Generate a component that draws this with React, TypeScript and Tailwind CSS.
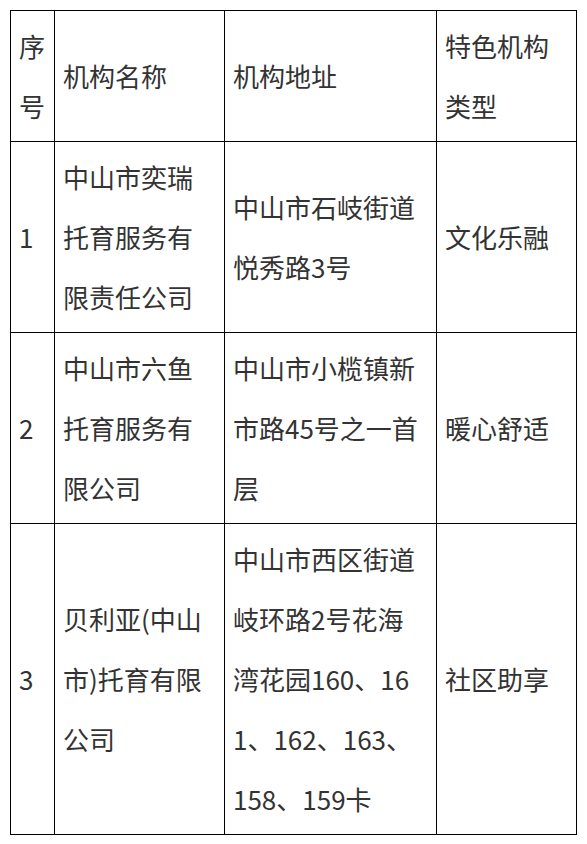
import React from "react";

const rows = [
  {
    no: "1",
    name: ["中山市奕瑞", "托育服务有", "限责任公司"],
    addr: ["中山市石岐街道", "悦秀路3号"],
    type: "文化乐融",
  },
  {
    no: "2",
    name: ["中山市六鱼", "托育服务有", "限公司"],
    addr: ["中山市小榄镇新", "市路45号之一首", "层"],
    type: "暖心舒适",
  },
  {
    no: "3",
    name: ["贝利亚(中山", "市)托育有限", "公司"],
    addr: ["中山市西区街道", "岐环路2号花海", "湾花园160、16", "1、162、163、", "158、159卡"],
    type: "社区助享",
  },
];

const Lines = ({ lines }: { lines: string[] }) => (
  <>
    {lines.map((l, i) => (
      <span key={i} className="block whitespace-nowrap">
        {l}
      </span>
    ))}
  </>
);

export default function App() {
  const cell = "border border-black px-2 py-[5px] align-middle text-left font-normal";

  return (
    <div className="bg-white min-h-[844px] pt-[10px] pl-[10px]">
      <table
        className="table-fixed border-collapse w-[566px] text-[26px] leading-[60px] text-[#333]"
        style={{ fontFamily: '"Noto Sans CJK SC", "Noto Sans", sans-serif' }}
      >
        <colgroup>
          <col className="w-[44px]" />
          <col className="w-[170px]" />
          <col className="w-[212px]" />
          <col className="w-[140px]" />
        </colgroup>
        <thead>
          <tr>
            <th className={cell}>
              <Lines lines={["序", "号"]} />
            </th>
            <th className={cell}>机构名称</th>
            <th className={cell}>机构地址</th>
            <th className={cell}>
              <Lines lines={["特色机构", "类型"]} />
            </th>
          </tr>
        </thead>
        <tbody>
          {rows.map((r) => (
            <tr key={r.no}>
              <td className={cell}>{r.no}</td>
              <td className={cell}>
                <Lines lines={r.name} />
              </td>
              <td className={cell}>
                <Lines lines={r.addr} />
              </td>
              <td className={cell}>{r.type}</td>
            </tr>
          ))}
        </tbody>
      </table>
    </div>
  );
}
